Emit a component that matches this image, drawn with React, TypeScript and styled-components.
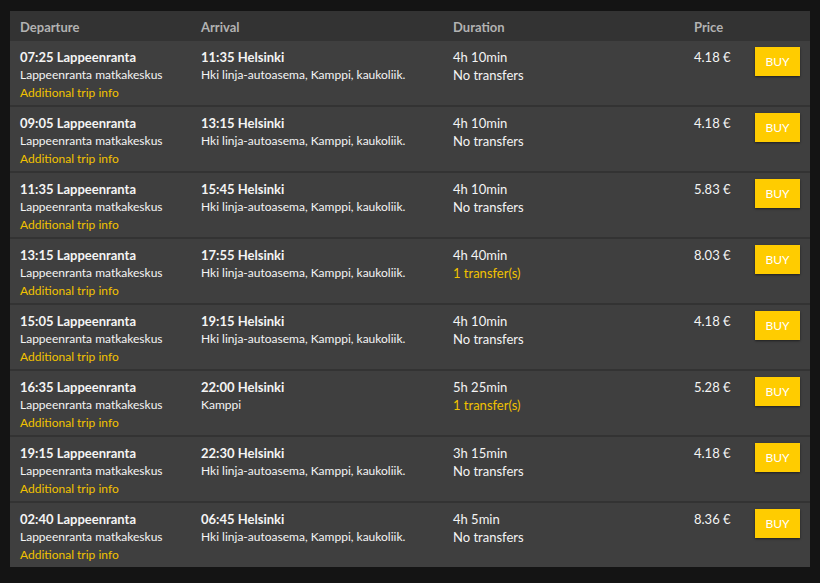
import styled, { createGlobalStyle } from 'styled-components'

const GlobalStyle = createGlobalStyle`
  html, body {
    margin: 0;
    padding: 0;
    background: #141414;
  }
  body {
    font-family: Lato, "Open Sans", sans-serif;
  }
`

const Page = styled.div`
  padding: 11px 10px 17px 10px;
`

const Table = styled.div`
  width: 800px;
  background: #3f3f3f;
`

const Grid = styled.div`
  display: grid;
  grid-template-columns: 181px 252px 241px 61px 55px;
  padding-left: 10px;
`

const HeaderRow = styled(Grid)`
  height: 30px;
  align-items: center;
  background: #333333;
`

const HeadCell = styled.div`
  color: #b2b2b2;
  font-size: 13px;
  font-weight: 700;
  padding-top: 2px;
`

const Row = styled(Grid)`
  box-sizing: border-box;
  height: 66px;
  padding-top: 7px;
  border-bottom: 2px solid #333333;

  &:last-child {
    height: 64px;
    border-bottom: none;
  }
`

const Cell = styled.div`
  display: flex;
  flex-direction: column;
  line-height: 18px;
  font-size: 12px;
  color: #f4f4f4;
`

const Time = styled.span`
  font-weight: 700;
  font-size: 13px;
`

const Plain = styled.span<{ $big?: boolean }>`
  font-size: ${({ $big }) => ($big ? '13px' : '12px')};
`

const Yellow = styled.span<{ $big?: boolean }>`
  color: #f2c200;
  font-size: ${({ $big }) => ($big ? '13px' : '12px')};
`

const BuyButton = styled.button`
  width: 45px;
  height: 29px;
  margin-top: -1px;
  background: #ffcc00;
  border: none;
  box-shadow: 0 1px 2px rgba(0, 0, 0, 0.5);
  color: #ffffff;
  font-family: Lato, "Open Sans", sans-serif;
  font-size: 12px;
  cursor: pointer;
  padding: 0;
`

type Trip = {
  dep: string
  arr: string
  arrStop: string
  duration: string
  transfers: number
  price: string
}

const trips: Trip[] = [
  { dep: '07:25', arr: '11:35', arrStop: 'Hki linja-autoasema, Kamppi, kaukoliik.', duration: '4h 10min', transfers: 0, price: '4.18 €' },
  { dep: '09:05', arr: '13:15', arrStop: 'Hki linja-autoasema, Kamppi, kaukoliik.', duration: '4h 10min', transfers: 0, price: '4.18 €' },
  { dep: '11:35', arr: '15:45', arrStop: 'Hki linja-autoasema, Kamppi, kaukoliik.', duration: '4h 10min', transfers: 0, price: '5.83 €' },
  { dep: '13:15', arr: '17:55', arrStop: 'Hki linja-autoasema, Kamppi, kaukoliik.', duration: '4h 40min', transfers: 1, price: '8.03 €' },
  { dep: '15:05', arr: '19:15', arrStop: 'Hki linja-autoasema, Kamppi, kaukoliik.', duration: '4h 10min', transfers: 0, price: '4.18 €' },
  { dep: '16:35', arr: '22:00', arrStop: 'Kamppi', duration: '5h 25min', transfers: 1, price: '5.28 €' },
  { dep: '19:15', arr: '22:30', arrStop: 'Hki linja-autoasema, Kamppi, kaukoliik.', duration: '3h 15min', transfers: 0, price: '4.18 €' },
  { dep: '02:40', arr: '06:45', arrStop: 'Hki linja-autoasema, Kamppi, kaukoliik.', duration: '4h 5min', transfers: 0, price: '8.36 €' },
]

export default function App() {
  return (
    <Page>
      <GlobalStyle />
      <Table>
        <HeaderRow>
          <HeadCell>Departure</HeadCell>
          <HeadCell>Arrival</HeadCell>
          <HeadCell>Duration</HeadCell>
          <HeadCell>Price</HeadCell>
          <div />
        </HeaderRow>
        {trips.map((t) => (
          <Row key={t.dep}>
            <Cell>
              <Time>{t.dep} Lappeenranta</Time>
              <Plain>Lappeenranta matkakeskus</Plain>
              <Yellow>Additional trip info</Yellow>
            </Cell>
            <Cell>
              <Time>{t.arr} Helsinki</Time>
              <Plain>{t.arrStop}</Plain>
            </Cell>
            <Cell>
              <Plain $big>{t.duration}</Plain>
              {t.transfers > 0 ? (
                <Yellow $big>{t.transfers} transfer(s)</Yellow>
              ) : (
                <Plain $big>No transfers</Plain>
              )}
            </Cell>
            <Cell>
              <Plain $big>{t.price}</Plain>
            </Cell>
            <div>
              <BuyButton>BUY</BuyButton>
            </div>
          </Row>
        ))}
      </Table>
    </Page>
  )
}
